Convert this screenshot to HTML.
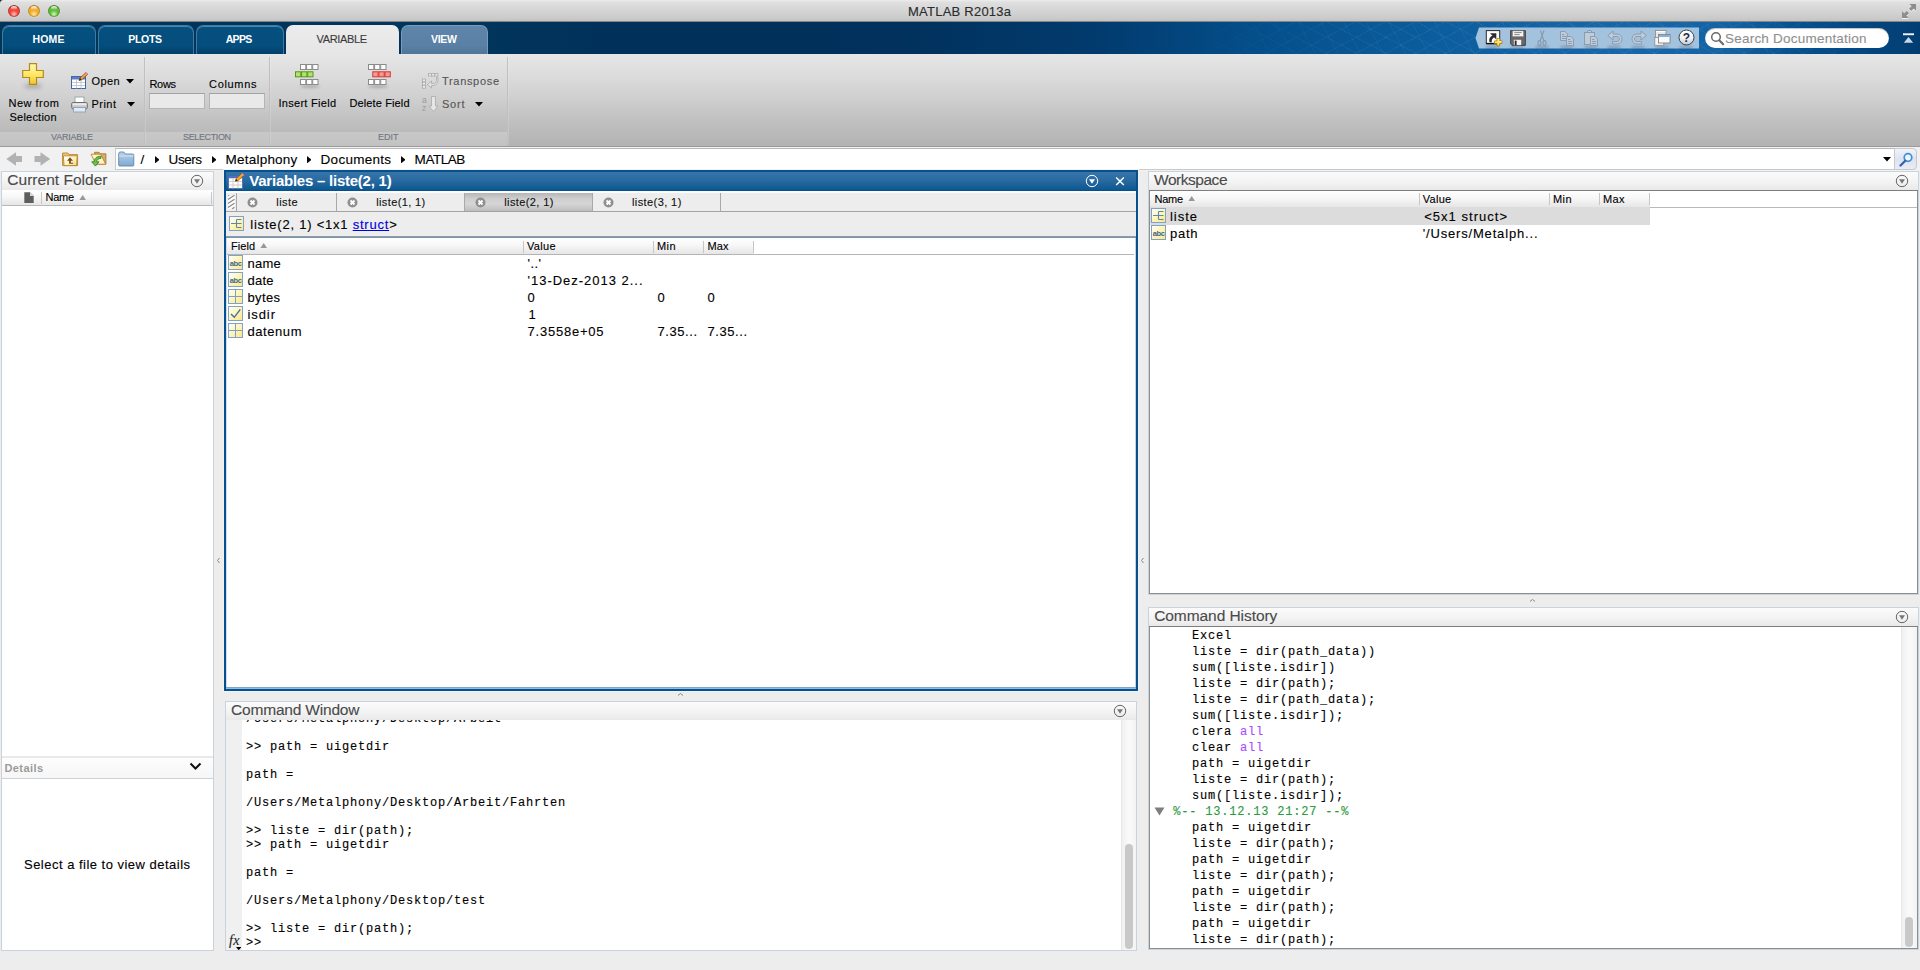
<!DOCTYPE html>
<html>
<head>
<meta charset="utf-8">
<title>MATLAB R2013a</title>
<style>
*{box-sizing:border-box;margin:0;padding:0}
html,body{width:1920px;height:970px;overflow:hidden;background:#ededed;font-family:"Liberation Sans",sans-serif;font-size:12px;color:#000}
.a{position:absolute;display:block}
.t{position:absolute;white-space:pre;-webkit-text-stroke-width:.12px}
</style>
</head>
<body>
<svg width="0" height="0" style="position:absolute"><defs><linearGradient id="gi" x1="0" y1="0" x2="1" y2="1"><stop offset="0" stop-color="#ffffff"/><stop offset=".4" stop-color="#fff7c6"/><stop offset="1" stop-color="#fae684"/></linearGradient></defs></svg>
<div class="a" style="left:0px;top:0px;width:1920px;height:22px;background:linear-gradient(#ececec,#dfdfdf 12%,#d6d6d6 45%,#cbcbcb 85%,#c4c4c4);border-bottom:1px solid #868686"></div>
<svg class="a" style="left:7px;top:4px" width="14" height="14" viewBox="0 0 14 14"><defs><radialGradient id="tl0" cx="50%" cy="78%" r="75%"><stop offset="0" stop-color="#ffc4bd"/><stop offset=".45" stop-color="#f2473d"/><stop offset=".82" stop-color="#f2473d"/><stop offset="1" stop-color="#8f241c"/></radialGradient><linearGradient id="th0" x1="0" y1="0" x2="0" y2="1"><stop offset="0" stop-color="#fff" stop-opacity=".95"/><stop offset="1" stop-color="#fff" stop-opacity=".05"/></linearGradient></defs><circle cx="7" cy="7.300" r="6.200" fill="rgba(255,255,255,.35)"/><circle cx="7" cy="7" r="5.850" fill="url(#tl0)"/><circle cx="7" cy="7" r="5.450" fill="none" stroke="#8f241c" stroke-width=".8" stroke-opacity=".75"/><ellipse cx="7" cy="3.900" rx="3.100" ry="1.900" fill="url(#th0)"/></svg>
<svg class="a" style="left:27px;top:4px" width="14" height="14" viewBox="0 0 14 14"><defs><radialGradient id="tl1" cx="50%" cy="78%" r="75%"><stop offset="0" stop-color="#ffe9a6"/><stop offset=".45" stop-color="#f0ae2c"/><stop offset=".82" stop-color="#f0ae2c"/><stop offset="1" stop-color="#a06c12"/></radialGradient><linearGradient id="th1" x1="0" y1="0" x2="0" y2="1"><stop offset="0" stop-color="#fff" stop-opacity=".95"/><stop offset="1" stop-color="#fff" stop-opacity=".05"/></linearGradient></defs><circle cx="7" cy="7.300" r="6.200" fill="rgba(255,255,255,.35)"/><circle cx="7" cy="7" r="5.850" fill="url(#tl1)"/><circle cx="7" cy="7" r="5.450" fill="none" stroke="#a06c12" stroke-width=".8" stroke-opacity=".75"/><ellipse cx="7" cy="3.900" rx="3.100" ry="1.900" fill="url(#th1)"/></svg>
<svg class="a" style="left:47px;top:4px" width="14" height="14" viewBox="0 0 14 14"><defs><radialGradient id="tl2" cx="50%" cy="78%" r="75%"><stop offset="0" stop-color="#d9f5b8"/><stop offset=".45" stop-color="#62bd3e"/><stop offset=".82" stop-color="#62bd3e"/><stop offset="1" stop-color="#35781f"/></radialGradient><linearGradient id="th2" x1="0" y1="0" x2="0" y2="1"><stop offset="0" stop-color="#fff" stop-opacity=".95"/><stop offset="1" stop-color="#fff" stop-opacity=".05"/></linearGradient></defs><circle cx="7" cy="7.300" r="6.200" fill="rgba(255,255,255,.35)"/><circle cx="7" cy="7" r="5.850" fill="url(#tl2)"/><circle cx="7" cy="7" r="5.450" fill="none" stroke="#35781f" stroke-width=".8" stroke-opacity=".75"/><ellipse cx="7" cy="3.900" rx="3.100" ry="1.900" fill="url(#th2)"/></svg>
<div class="t" style="left:908.00px;top:1.50px;font-size:13px;line-height:19px;color:#2b2b2b;letter-spacing:0.233px;letter-spacing:0.233457px;">MATLAB R2013a</div>
<svg class="a" style="left:1901px;top:3px" width="16" height="17" viewBox="0 0 16 17"><g fill="#fff" opacity=".7" transform="translate(0,1)"><path d="M8.300 1h6.700v6.700l-2.300-2.300-2.500 2.500-2.100-2.100 2.500-2.500z"/><path d="M7.700 15H1V8.300l2.300 2.300 2.500-2.500 2.100 2.100-2.500 2.500z"/></g><g fill="#8d8d8d"><path d="M8.300 1h6.700v6.700l-2.300-2.300-2.500 2.500-2.100-2.100 2.500-2.500z"/><path d="M7.700 15H1V8.300l2.300 2.300 2.500-2.500 2.100 2.100-2.500 2.500z"/></g></svg>
<div class="a" style="left:0px;top:22px;width:1920px;height:32px;background:linear-gradient(90deg,#013459 0,#01355b 480px,#01305a 640px,#01315c 900px,#023b6e 1100px,#044f8b 1260px,#0b5c9c 1420px,#1767a8 1600px,#1464a5 1720px,#05508f 1800px,#023d72 1920px)"></div>
<div class="a" style="left:1180px;top:22px;width:740px;height:32px;background:repeating-linear-gradient(28deg,rgba(255,255,255,0) 0,rgba(255,255,255,0) 13px,rgba(255,255,255,.05) 13px,rgba(255,255,255,.05) 14px),repeating-linear-gradient(-28deg,rgba(255,255,255,0) 0,rgba(255,255,255,0) 13px,rgba(255,255,255,.05) 13px,rgba(255,255,255,.05) 14px),repeating-linear-gradient(62deg,rgba(255,255,255,0) 0,rgba(255,255,255,0) 19px,rgba(255,255,255,.04) 19px,rgba(255,255,255,.04) 20px);-webkit-mask-image:linear-gradient(90deg,transparent,#000 25%,#000 75%,transparent);mask-image:linear-gradient(90deg,transparent,#000 25%,#000 75%,transparent)"></div>
<svg class="a" style="left:0px;top:0px" width="4" height="4" viewBox="0 0 4 4"><path d="M0 0h3.500A3.500 3.500 0 0 0 0 3.500z" fill="#16322a"/></svg>
<div class="a" style="left:2px;top:25px;width:94px;height:28.5px;border-radius:7px 7px 0 0;background:linear-gradient(#05507f,#044e7e 70%,#033f69);border:1px solid #3d79a3;border-bottom:none;box-shadow:inset 0 1px 0 #4b86ae"></div>
<div class="t" style="left:32.50px;top:31.50px;font-size:10.5px;line-height:15px;color:#fff;font-weight:bold;-webkit-text-stroke-width:0;letter-spacing:0.167px;letter-spacing:0.166612px;">HOME</div>
<div class="a" style="left:98px;top:25px;width:96px;height:28.5px;border-radius:7px 7px 0 0;background:linear-gradient(#05507f,#044e7e 70%,#033f69);border:1px solid #3d79a3;border-bottom:none;box-shadow:inset 0 1px 0 #4b86ae"></div>
<div class="t" style="left:128.30px;top:31.50px;font-size:10.5px;line-height:15px;color:#fff;font-weight:bold;-webkit-text-stroke-width:0;letter-spacing:-0.300px;letter-spacing:-0.300479px;">PLOTS</div>
<div class="a" style="left:196px;top:25px;width:88px;height:28.5px;border-radius:7px 7px 0 0;background:linear-gradient(#05507f,#044e7e 70%,#033f69);border:1px solid #3d79a3;border-bottom:none;box-shadow:inset 0 1px 0 #4b86ae"></div>
<div class="t" style="left:225.70px;top:31.50px;font-size:10.5px;line-height:15px;color:#fff;font-weight:bold;-webkit-text-stroke-width:0;letter-spacing:-0.664px;letter-spacing:-0.664435px;">APPS</div>
<div class="a" style="left:286px;top:25px;width:113px;height:29px;border-radius:7px 7px 0 0;background:linear-gradient(#ececec,#e6e6e6)"></div>
<div class="t" style="left:316.50px;top:31.00px;font-size:11px;line-height:16px;color:#3a3a3a;letter-spacing:-0.355px;letter-spacing:-0.355187px;">VARIABLE</div>
<div class="a" style="left:401px;top:25px;width:87px;height:28.5px;border-radius:7px 7px 0 0;background:linear-gradient(#5f86aa,#5a81a5 70%,#4f7598);border:1px solid #7a9bb9;border-bottom:none"></div>
<div class="t" style="left:431.00px;top:31.50px;font-size:10.5px;line-height:15px;color:#fff;font-weight:bold;-webkit-text-stroke-width:0;letter-spacing:-0.278px;letter-spacing:-0.278185px;">VIEW</div>
<svg class="a" style="left:1474px;top:27px" width="226" height="22" viewBox="0 0 226 22"><path d="M1.500 11 L5 0.500 H225 V21.500 H5 Z" fill="#a3c2dd"/></svg>
<svg class="a" style="left:1485px;top:30px" width="18" height="17" viewBox="0 0 18 17"><rect x="1.300" y="0.600" width="13.400" height="13" fill="#fbfbfb" stroke="#2a2a2a" stroke-width="1"/><path d="M1.300 13.600h13.400" stroke="#111" stroke-width="1.400"/><path d="M5 3.200h6.300v6.300z" fill="#2b2b2b"/><path d="M9.600 7.300C7.300 8.200 6.300 9.900 6.800 12.500L4.600 12.200C3.600 9 5 6.400 7.700 5.400z" fill="#2b2b2b"/><path d="M12 8.500h2.600v2.400H17v2.600h-2.400V16H12v-2.500H9.500v-2.600H12z" fill="#ffe25a" stroke="#a87f0e" stroke-width=".8"/><path d="M12.600 9.300h1.300v2.300h2.300v.600" fill="none" stroke="#fff8c8" stroke-width=".7"/></svg>
<svg class="a" style="left:1510px;top:30px" width="16" height="16" viewBox="0 0 16 16"><path d="M0.600 0.600h14.800v14.800H2.200L0.600 13.800z" fill="#686868" stroke="#3e3e3e" stroke-width=".9"/><rect x="2.600" y="0.900" width="10.800" height="5.600" fill="#f6f6f6" stroke="#8a8a8a" stroke-width=".5"/><path d="M4.300 2.600h7.400M4.300 4.600h5.400" stroke="#7a7a7a" stroke-width=".9"/><rect x="3.800" y="9.800" width="7.400" height="5.400" fill="#f4f4f4"/><rect x="4.700" y="10.600" width="1.900" height="4.600" fill="#2a2a2a"/></svg>
<div class="a" style="left:1485px;top:45.5px;width:14px;height:2.5px;border-radius:50%;background:rgba(20,40,70,.28);filter:blur(1.200px)"></div>
<div class="a" style="left:1510px;top:45.5px;width:14px;height:2.5px;border-radius:50%;background:rgba(20,40,70,.28);filter:blur(1.200px)"></div>
<div class="a" style="left:1535px;top:45.5px;width:14px;height:2.5px;border-radius:50%;background:rgba(20,40,70,.28);filter:blur(1.200px)"></div>
<div class="a" style="left:1560px;top:45.5px;width:14px;height:2.5px;border-radius:50%;background:rgba(20,40,70,.28);filter:blur(1.200px)"></div>
<div class="a" style="left:1584px;top:45.5px;width:14px;height:2.5px;border-radius:50%;background:rgba(20,40,70,.28);filter:blur(1.200px)"></div>
<div class="a" style="left:1607px;top:45.5px;width:14px;height:2.5px;border-radius:50%;background:rgba(20,40,70,.28);filter:blur(1.200px)"></div>
<div class="a" style="left:1631px;top:45.5px;width:14px;height:2.5px;border-radius:50%;background:rgba(20,40,70,.28);filter:blur(1.200px)"></div>
<div class="a" style="left:1655px;top:45.5px;width:14px;height:2.5px;border-radius:50%;background:rgba(20,40,70,.28);filter:blur(1.200px)"></div>
<div class="a" style="left:1679px;top:45.5px;width:14px;height:2.5px;border-radius:50%;background:rgba(20,40,70,.28);filter:blur(1.200px)"></div>
<svg class="a" style="left:1534px;top:30px" width="16" height="16" viewBox="0 0 16 16"><g stroke="#8798ab" fill="none" stroke-width="1.100"><path d="M10 0.500L6.300 10.500M6.500 0.500L9.700 10.500"/><ellipse cx="5.500" cy="13" rx="1.500" ry="2.400"/><ellipse cx="10.500" cy="13" rx="1.500" ry="2.400"/></g></svg>
<svg class="a" style="left:1559px;top:30px" width="16" height="16" viewBox="0 0 16 16"><g fill="#bfcddb" stroke="#8798ab" stroke-width=".9"><path d="M1.500 1.500h4.500l2.500 2.500v6.500h-7z"/><path d="M7.500 6.500h4.500l2.500 2.500v6.500h-7z"/></g><path d="M3 4.500h2.500M3 6.500h4M3 8.500h4M9 9.500h2.500M9 11.500h4M9 13.500h4" stroke="#8798ab" stroke-width=".9"/></svg>
<svg class="a" style="left:1583px;top:30px" width="16" height="16" viewBox="0 0 16 16"><g fill="#bfcddb" stroke="#8798ab" stroke-width=".9"><rect x="1.500" y="2.500" width="10" height="12"/><path d="M4 2.500l1-2h3l1 2z"/><path d="M7.500 6.500h4.500l2.500 2.500v6.500h-7z"/></g><path d="M9 9.500h2.500M9 11.500h4M9 13.500h4" stroke="#8798ab" stroke-width=".9"/></svg>
<svg class="a" style="left:1607px;top:30px" width="16" height="16" viewBox="0 0 16 16"><path d="M0.800 5.500L6 1v3h4c3 0 5 2 5 5s-2 5-5 5H5.500v-2.500H10c1.500 0 2.500-1 2.500-2.500S11.500 6.500 10 6.500H6v3.500z" fill="#bfcddb" stroke="#8798ab" stroke-width=".9"/></svg>
<svg class="a" style="left:1631px;top:30px" width="16" height="16" viewBox="0 0 16 16"><path d="M15.200 5.500L10 1v3H6C3 4 1 6 1 9s2 5 5 5h4.500v-2.500H6C4.500 11.500 3.500 10.500 3.500 9S4.500 6.500 6 6.500h4v3.500z" fill="#bfcddb" stroke="#8798ab" stroke-width=".9"/></svg>
<svg class="a" style="left:1654px;top:30px" width="17" height="16" viewBox="0 0 17 16"><rect x="1.500" y="0.500" width="10.500" height="9" fill="#e8e8e8" stroke="#8a8a8a" stroke-width=".8"/><path d="M2 1.500h9.500" stroke="#fbfbfb"/><rect x="0.800" y="7.500" width="9" height="7.800" fill="#f4f4f4" stroke="#8a8a8a" stroke-width=".8"/><rect x="4.500" y="4.500" width="11.500" height="8.500" fill="#fafafa" stroke="#777" stroke-width=".8"/><rect x="5" y="5" width="10.500" height="2" fill="#7fb2de"/></svg>
<svg class="a" style="left:1678px;top:29px" width="17" height="17" viewBox="0 0 17 17"><defs><linearGradient id="gh" x1="0" y1="0" x2="0" y2="1"><stop offset="0" stop-color="#ffffff"/><stop offset=".55" stop-color="#eef1f4"/><stop offset="1" stop-color="#bfc7cf"/></linearGradient></defs><circle cx="8.500" cy="8.500" r="7.500" fill="url(#gh)" stroke="#37414d" stroke-width="1"/><text x="8.500" y="12.900" text-anchor="middle" font-family="Liberation Sans" font-weight="bold" font-size="12" fill="#1d2a44">?</text></svg>
<div class="a" style="left:1705px;top:28px;width:184px;height:20px;border-radius:10px;background:#fff;box-shadow:inset 0 1px 1px rgba(0,0,0,.25)"></div>
<svg class="a" style="left:1710px;top:31.2px" width="15" height="15" viewBox="0 0 15 15"><circle cx="6" cy="6" r="4.300" fill="none" stroke="#686868" stroke-width="1.500"/><path d="M9.200 9.200l4 4" stroke="#686868" stroke-width="2" stroke-linecap="round"/></svg>
<div class="t" style="left:1725.00px;top:28.80px;font-size:13.5px;line-height:19px;color:#8f8f8f;letter-spacing:0.220px;letter-spacing:0.219595px;">Search Documentation</div>
<svg class="a" style="left:1902px;top:33px" width="14" height="11" viewBox="0 0 14 11"><rect x="1" y="0.300" width="11" height="1.900" fill="#eef3f8"/><path d="M6.500 3.900L11.200 9.700H1.800z" fill="#c6d7e7"/></svg>
<div class="a" style="left:0px;top:54px;width:1920px;height:92px;background:linear-gradient(#e6e6e6,#e0e0e0 15%,#d1d1d1 45%,#bfbfbf 75%,#b3b3b3)"></div>
<div class="a" style="left:0px;top:146px;width:1920px;height:1px;background:#9b9b9b"></div>
<div class="a" style="left:0px;top:132px;width:507px;height:14px;background:linear-gradient(#c8c8c8,#c2c2c2)"></div>
<div class="a" style="left:144px;top:57px;width:1px;height:88px;background:#c0c0c0"></div>
<div class="a" style="left:145px;top:57px;width:1px;height:88px;background:rgba(255,255,255,.15)"></div>
<div class="a" style="left:269px;top:57px;width:1px;height:88px;background:#c0c0c0"></div>
<div class="a" style="left:270px;top:57px;width:1px;height:88px;background:rgba(255,255,255,.15)"></div>
<div class="a" style="left:507px;top:57px;width:1px;height:88px;background:#c0c0c0"></div>
<div class="a" style="left:508px;top:57px;width:1px;height:88px;background:rgba(255,255,255,.15)"></div>
<div class="t" style="left:51.00px;top:131.10px;font-size:9px;line-height:13px;color:#70757e;letter-spacing:-0.193px;letter-spacing:-0.193205px;">VARIABLE</div>
<div class="t" style="left:183.00px;top:131.10px;font-size:9px;line-height:13px;color:#70757e;letter-spacing:-0.377px;letter-spacing:-0.3765px;">SELECTION</div>
<div class="t" style="left:378.00px;top:131.10px;font-size:9px;line-height:13px;color:#70757e;letter-spacing:-0.000px;letter-spacing:-0.000197917px;">EDIT</div>
<div class="a" style="left:24px;top:84px;width:18px;height:4px;border-radius:50%;background:rgba(0,0,0,.25);filter:blur(2px)"></div>
<svg class="a" style="left:22px;top:63px" width="22" height="22" viewBox="0 0 22 22"><defs><linearGradient id="gp" x1="0" y1="0" x2="0" y2="1"><stop offset="0" stop-color="#fff7b8"/><stop offset=".5" stop-color="#ffe96b"/><stop offset="1" stop-color="#f2c52c"/></linearGradient></defs><path d="M7.500 0.700h7v6.800h6.800v7h-6.800v6.800h-7v-6.800H0.700v-7h6.800z" fill="url(#gp)" stroke="#b58a1a" stroke-width="1.200"/></svg>
<div class="t" style="left:8.50px;top:94.50px;font-size:11px;line-height:16px;color:#000;letter-spacing:0.491px;letter-spacing:0.491174px;">New from</div>
<div class="t" style="left:9.50px;top:108.70px;font-size:11px;line-height:16px;color:#000;letter-spacing:0.219px;letter-spacing:0.218529px;">Selection</div>
<svg class="a" style="left:71px;top:72px" width="17" height="17" viewBox="0 0 17 17"><rect x="0.500" y="4.500" width="14" height="12" fill="#fff" stroke="#4466a8"/><rect x="1" y="5" width="13" height="2.500" fill="#5b7ec4"/><path d="M1 10.500h13M1 13.500h13M5.500 7.500v9M10 7.500v9" stroke="#b7bfd0" stroke-width=".8"/><path d="M8 8.500l1-2.500 6-5.500 1.800 1.800-6 5.500z" fill="#f6a13a" stroke="#7a4a12" stroke-width=".7"/><path d="M14 1.500l1.500-1 1.300 1.300-1 1.500z" fill="#e88"/><path d="M8 8.500l1-2.500 1.500 1.500z" fill="#222"/></svg>
<div class="t" style="left:91.50px;top:73.20px;font-size:11px;line-height:16px;color:#000;letter-spacing:0.364px;letter-spacing:0.363578px;">Open</div>
<svg class="a" style="left:126px;top:79px" width="8" height="4.5" viewBox="0 0 8 4.5"><path d="M0 0h8L4 4.500z" fill="#000"/></svg>
<svg class="a" style="left:71px;top:96px" width="17" height="17" viewBox="0 0 17 17"><rect x="4" y="1" width="9" height="6" fill="#fff" stroke="#9aa"/><rect x="0.700" y="6.500" width="15.600" height="6.500" rx="1.500" fill="#c9c9c9" stroke="#6d6d6d"/><rect x="1.500" y="7.300" width="14" height="2" fill="#e9e9e9"/><rect x="2.500" y="11.500" width="12" height="4.500" fill="#dfeaf5" stroke="#8fa6bd"/></svg>
<div class="t" style="left:91.50px;top:96.30px;font-size:11px;line-height:16px;color:#000;letter-spacing:0.471px;letter-spacing:0.470527px;">Print</div>
<svg class="a" style="left:127px;top:102px" width="8" height="4.5" viewBox="0 0 8 4.5"><path d="M0 0h8L4 4.500z" fill="#000"/></svg>
<div class="t" style="left:149.50px;top:75.70px;font-size:11px;line-height:16px;color:#000;letter-spacing:-0.335px;letter-spacing:-0.335167px;">Rows</div>
<div class="t" style="left:209.00px;top:75.70px;font-size:11px;line-height:16px;color:#000;letter-spacing:0.683px;letter-spacing:0.682648px;">Columns</div>
<div class="a" style="left:149px;top:93px;width:56px;height:16px;background:#e9e9e9;border:1px solid #b4b4b4;border-top-color:#a2a2a2"></div>
<div class="a" style="left:209px;top:93px;width:56px;height:16px;background:#e9e9e9;border:1px solid #b4b4b4;border-top-color:#a2a2a2"></div>
<div class="a" style="left:300px;top:85px;width:20px;height:3px;border-radius:50%;background:rgba(0,0,0,.22);filter:blur(1.500px)"></div>
<svg class="a" style="left:294px;top:63px" width="27" height="23" viewBox="0 0 27 23"><rect x="6.5" y="1.5" width="5.300" height="5" fill="#fdfdfd" stroke="#8a8a8a"/><rect x="12.6" y="1.5" width="5.300" height="5" fill="#fdfdfd" stroke="#8a8a8a"/><rect x="18.7" y="1.5" width="5.300" height="5" fill="#fdfdfd" stroke="#8a8a8a"/><rect x="1.5" y="8.8" width="5.300" height="5" fill="#b9e06a" stroke="#4f9a1e"/><rect x="7.6" y="8.8" width="5.300" height="5" fill="#b9e06a" stroke="#4f9a1e"/><rect x="13.7" y="8.8" width="5.300" height="5" fill="#b9e06a" stroke="#4f9a1e"/><rect x="6.5" y="16.5" width="5.300" height="5" fill="#fdfdfd" stroke="#8a8a8a"/><rect x="12.6" y="16.5" width="5.300" height="5" fill="#fdfdfd" stroke="#8a8a8a"/><rect x="18.7" y="16.5" width="5.300" height="5" fill="#fdfdfd" stroke="#8a8a8a"/></svg>
<div class="t" style="left:278.50px;top:95.00px;font-size:11px;line-height:16px;color:#000;letter-spacing:0.281px;letter-spacing:0.28096px;">Insert Field</div>
<div class="a" style="left:368px;top:85px;width:20px;height:3px;border-radius:50%;background:rgba(0,0,0,.22);filter:blur(1.500px)"></div>
<svg class="a" style="left:366px;top:63px" width="27" height="23" viewBox="0 0 27 23"><rect x="2.5" y="1.5" width="5.300" height="5" fill="#fdfdfd" stroke="#8a8a8a"/><rect x="8.6" y="1.5" width="5.300" height="5" fill="#fdfdfd" stroke="#8a8a8a"/><rect x="14.7" y="1.5" width="5.300" height="5" fill="#fdfdfd" stroke="#8a8a8a"/><rect x="6.8" y="8.8" width="5.300" height="5" fill="#f79a94" stroke="#d8362f"/><rect x="12.9" y="8.8" width="5.300" height="5" fill="#f79a94" stroke="#d8362f"/><rect x="19" y="8.8" width="5.300" height="5" fill="#f79a94" stroke="#d8362f"/><rect x="2.5" y="16.5" width="5.300" height="5" fill="#fdfdfd" stroke="#8a8a8a"/><rect x="8.6" y="16.5" width="5.300" height="5" fill="#fdfdfd" stroke="#8a8a8a"/><rect x="14.7" y="16.5" width="5.300" height="5" fill="#fdfdfd" stroke="#8a8a8a"/></svg>
<div class="t" style="left:349.50px;top:95.00px;font-size:11px;line-height:16px;color:#000;letter-spacing:0.119px;letter-spacing:0.118577px;">Delete Field</div>
<svg class="a" style="left:422px;top:73px" width="17" height="17" viewBox="0 0 17 17"><g fill="#ededed" stroke="#a9a9a9" stroke-width=".8"><rect x="6.500" y="0.500" width="3" height="2.500"/><rect x="9.700" y="0.500" width="3" height="2.500"/><rect x="12.900" y="0.500" width="3" height="2.500"/><rect x="0.500" y="6" width="3" height="2.800"/><rect x="0.500" y="9.200" width="3" height="2.800"/><rect x="0.500" y="12.400" width="3" height="2.800"/></g><path d="M14.500 4.500v3c0 2-1.500 3-3.500 3H9.500V8L5.500 11.500 9.500 15v-2.500H11c3 0 5-2 5-5v-3z" fill="#e3e3e3" stroke="#a9a9a9" stroke-width=".8"/></svg>
<div class="t" style="left:442.00px;top:72.70px;font-size:11px;line-height:16px;color:#555;letter-spacing:0.680px;letter-spacing:0.679645px;">Transpose</div>
<svg class="a" style="left:422px;top:96px" width="17" height="17" viewBox="0 0 17 17"><text x="0" y="6.500" font-family="Liberation Sans" font-size="8.500" fill="#9c9c9c">a</text><text x="0" y="15" font-family="Liberation Sans" font-size="8.500" fill="#9c9c9c">z</text><path d="M9.500 0.500h4v9.500h2.500L11.500 15.500 7 10h2.500z" fill="#e6e6e6" stroke="#a9a9a9" stroke-width=".8"/></svg>
<div class="t" style="left:442.00px;top:96.30px;font-size:11px;line-height:16px;color:#555;letter-spacing:0.775px;letter-spacing:0.775333px;">Sort</div>
<svg class="a" style="left:475px;top:102px" width="8" height="4.5" viewBox="0 0 8 4.5"><path d="M0 0h8L4 4.500z" fill="#000"/></svg>
<div class="a" style="left:0px;top:147px;width:1920px;height:24px;background:#f1f1f1"></div>
<svg class="a" style="left:6px;top:151px" width="17" height="16" viewBox="0 0 17 16"><path d="M0.300 8L10 1.200v3.800h6v6h-6v3.800z" fill="#b2b2b2"/></svg>
<svg class="a" style="left:34px;top:151px" width="17" height="16" viewBox="0 0 17 16"><path d="M16.200 8L6.500 1.200v3.800h-6v6h6v3.800z" fill="#b2b2b2"/></svg>
<svg class="a" style="left:62px;top:152px" width="17" height="15" viewBox="0 0 17 15"><defs><linearGradient id="gf" x1="0" y1="0" x2="1" y2="1"><stop offset="0" stop-color="#ffffff"/><stop offset=".55" stop-color="#fff3bf"/><stop offset="1" stop-color="#f2d777"/></linearGradient></defs><path d="M0.600 1h5.200l1.200 1.600h8.600v11H0.600z" fill="#e9c777" stroke="#b8862d" stroke-width=".9"/><path d="M1.400 3.800h13.800l-0.600 9.800H2z" fill="url(#gf)" stroke="#b8862d" stroke-width=".9"/><path d="M8 5.300L5 8.800h2.100v3h4v-1.100H8.900V8.800H11z" fill="#7a4a20"/></svg>
<svg class="a" style="left:90px;top:151px" width="17" height="16" viewBox="0 0 17 16"><path d="M4.500 1.300h4.600l1 1.500h5.800v10.400H6z" fill="#d2ae6e" stroke="#a57a2c" stroke-width=".9"/><path d="M1 3.200h9.800l4.800 10H6z" fill="#fff4cf" stroke="#b8862d" stroke-width=".9"/><path d="M11 5.200c-4.300 0-6.800 2.200-6.800 5.600H1.700l3.700 4.300 3.700-4.300H6.700c0-2 1.500-3.400 4.300-3.400z" fill="#6cc24a" stroke="#2f7d1a" stroke-width=".8"/></svg>
<div class="a" style="left:115px;top:148px;width:1780px;height:21.5px;background:#fff;border:1px solid #c9c9c9;border-top-color:#b9b9b9"></div>
<svg class="a" style="left:118px;top:151px" width="17" height="16" viewBox="0 0 17 16"><defs><linearGradient id="gb" x1="0" y1="0" x2="0" y2="1"><stop offset="0" stop-color="#b9d3ea"/><stop offset="1" stop-color="#7ea9d0"/></linearGradient></defs><path d="M0.700 2.500q0-1.500 1.500-1.500h3.600l1.500 2h7.500q1 0 1 1v10q0 1-1 1H1.700q-1 0-1-1z" fill="url(#gb)" stroke="#5f86ad" stroke-width=".9"/><path d="M1 5h14.500" stroke="#d6e6f4"/></svg>
<div class="t" style="left:140.50px;top:149.60px;font-size:13.5px;line-height:19px;color:#000;letter-spacing:0.249px;letter-spacing:0.24932px;">/</div>
<div class="t" style="left:168.60px;top:149.60px;font-size:13.5px;line-height:19px;color:#000;letter-spacing:-0.463px;letter-spacing:-0.463285px;">Users</div>
<div class="t" style="left:225.60px;top:149.60px;font-size:13.5px;line-height:19px;color:#000;letter-spacing:0.212px;letter-spacing:0.211737px;">Metalphony</div>
<div class="t" style="left:320.60px;top:149.60px;font-size:13.5px;line-height:19px;color:#000;letter-spacing:0.265px;letter-spacing:0.265231px;">Documents</div>
<div class="t" style="left:414.60px;top:149.60px;font-size:13.5px;line-height:19px;color:#000;letter-spacing:-0.462px;letter-spacing:-0.462352px;">MATLAB</div>
<svg class="a" style="left:154.7px;top:155.8px" width="4.7" height="7.4" viewBox="0 0 4.7 7.4"><path d="M0 0L4.700 3.700 0 7.400z" fill="#0a0a0a"/></svg>
<svg class="a" style="left:211.7px;top:155.8px" width="4.7" height="7.4" viewBox="0 0 4.7 7.4"><path d="M0 0L4.700 3.700 0 7.400z" fill="#0a0a0a"/></svg>
<svg class="a" style="left:306.8px;top:155.8px" width="4.7" height="7.4" viewBox="0 0 4.7 7.4"><path d="M0 0L4.700 3.700 0 7.400z" fill="#0a0a0a"/></svg>
<svg class="a" style="left:400.6px;top:155.8px" width="4.7" height="7.4" viewBox="0 0 4.7 7.4"><path d="M0 0L4.700 3.700 0 7.400z" fill="#0a0a0a"/></svg>
<svg class="a" style="left:1883px;top:157.3px" width="8" height="4.5" viewBox="0 0 8 4.5"><path d="M0 0h8L4 4.500z" fill="#000"/></svg>
<div class="a" style="left:1894px;top:148px;width:22.5px;height:21.5px;background:linear-gradient(#f1f3f8,#dfe3ee 50%,#e9ecf3);border:1px solid #c5c9d3;border-radius:0 4px 4px 0"></div>
<svg class="a" style="left:1899px;top:152px" width="15" height="15" viewBox="0 0 15 15"><circle cx="9" cy="5.500" r="3.800" fill="#eaf6ff" stroke="#3f8fd6" stroke-width="1.700"/><path d="M6.300 8.700L1.500 13.500" stroke="#2f62b5" stroke-width="2.200" stroke-linecap="round"/></svg>
<div class="a" style="left:1px;top:171px;width:213px;height:780px;background:#fff;border:1px solid #c9d3de"></div>
<div class="a" style="left:2px;top:172px;width:211px;height:18px;background:linear-gradient(#fbfbfb,#f4f4f4 50%,#e9e9e9)"></div>
<div class="t" style="left:7.30px;top:168.50px;font-size:15.5px;line-height:22px;color:#4a4a4a;letter-spacing:0.021px;letter-spacing:0.0210895px;">Current Folder</div>
<svg class="a" style="left:190px;top:174px" width="14" height="14" viewBox="0 0 14 14"><circle cx="7" cy="7" r="5.700" fill="none" stroke="#666" stroke-width="1"/><path d="M4 5.200h6L7 9.800z" fill="#777"/></svg>
<div class="a" style="left:2px;top:190px;width:211px;height:15px;background:linear-gradient(#ffffff,#f7f7f7 45%,#e6e6e6)"></div>
<div class="a" style="left:2px;top:205px;width:211px;height:1px;background:#b9b9b9"></div>
<svg class="a" style="left:24px;top:191.7px" width="10" height="11.3" viewBox="0 0 10 11.3"><path d="M0.300 0.300h5.700l3.700 3.700v7h-9.400z" fill="#5e5e5e"/><path d="M6 0.300v3.700h3.700z" fill="#d8d8d8"/></svg>
<div class="a" style="left:41px;top:192px;width:1px;height:12px;background:#c8c8c8"></div>
<div class="a" style="left:211px;top:192px;width:1px;height:12px;background:#c8c8c8"></div>
<div class="t" style="left:45.50px;top:189.00px;font-size:11px;line-height:16px;color:#000;letter-spacing:-0.281px;letter-spacing:-0.280833px;">Name</div>
<svg class="a" style="left:79px;top:194.5px" width="7.4" height="5.6" viewBox="0 0 7.4 5.6"><path d="M3.700 0L7.400 5.600H0z" fill="#989898"/></svg>
<div class="a" style="left:2px;top:756px;width:211px;height:2px;background:#e9e9e9"></div>
<div class="a" style="left:2px;top:758px;width:211px;height:20px;background:linear-gradient(#fdfdfd,#f6f6f6)"></div>
<div class="a" style="left:2px;top:778px;width:211px;height:1px;background:#cdd3da"></div>
<div class="t" style="left:4.50px;top:760.00px;font-size:11px;line-height:16px;color:#9b9b9b;font-weight:bold;-webkit-text-stroke-width:0;letter-spacing:0.405px;letter-spacing:0.404594px;">Details</div>
<svg class="a" style="left:189px;top:762px" width="13" height="9" viewBox="0 0 13 9"><path d="M1.500 1.500l5 5 5-5" fill="none" stroke="#111" stroke-width="2"/></svg>
<div class="t" style="left:24.00px;top:854.50px;font-size:13px;line-height:19px;color:#000;letter-spacing:0.483px;letter-spacing:0.4834px;">Select a file to view details</div>
<div class="a" style="left:224px;top:170px;width:914px;height:521px;background:#fff;border:2px solid #05508f;box-shadow:0 0 0 1px #f5f1ee"></div>
<div class="a" style="left:226px;top:192px;width:1px;height:495px;background:rgba(120,160,200,.35)"></div>
<div class="a" style="left:1135px;top:192px;width:1px;height:495px;background:rgba(120,160,200,.45)"></div>
<div class="a" style="left:226px;top:687px;width:910px;height:1px;background:#7fa6ca"></div>
<div class="a" style="left:226px;top:688px;width:910px;height:1px;background:#8fbfe9"></div>
<div class="a" style="left:226px;top:172px;width:910px;height:18px;background:linear-gradient(#3676aa,#2a6aa2 45%,#115b93 90%,#0d578f)"></div>
<div class="a" style="left:226px;top:190px;width:910px;height:1px;background:#05508f"></div>
<div class="a" style="left:226px;top:191px;width:910px;height:2px;background:#fcfcfc"></div>
<svg class="a" style="left:228px;top:173px" width="17" height="16" viewBox="0 0 17 16"><rect x="0.500" y="3.500" width="14" height="12" fill="#fdfdff" stroke="#4f64a8" stroke-width=".8"/><rect x="0.500" y="3.300" width="14" height="2" fill="#4f6fc4"/><path d="M1 8.500h13M1 12h13M5 5.500v10M10 5.500v10" stroke="#c9c3bd" stroke-width=".8"/><path d="M7.300 8.300l.700-2.300 6-5.800 1.900 1.900-6 5.800z" fill="#f7a823" stroke="#a84a10" stroke-width=".6"/><path d="M13.300 0.900l.900-.700 1.900 1.900-.700.900z" fill="#f090a8"/><path d="M7.300 8.300l.700-2.300 1.600 1.600z" fill="#111"/></svg>
<div class="t" style="left:249.30px;top:170.00px;font-size:15px;line-height:21px;color:#fff;font-weight:bold;-webkit-text-stroke-width:0;letter-spacing:-0.236px;letter-spacing:-0.235618px;">Variables – liste(2, 1)</div>
<svg class="a" style="left:1085px;top:174px" width="14" height="14" viewBox="0 0 14 14"><circle cx="7" cy="7" r="5.700" fill="none" stroke="#fff" stroke-width="1"/><path d="M4 5.200h6L7 9.800z" fill="#fff"/></svg>
<svg class="a" style="left:1115px;top:176px" width="10" height="10" viewBox="0 0 10 10"><path d="M1.200 1.500l7.600 7.500M8.800 1.500l-7.600 7.500" stroke="#fff" stroke-width="1.500"/></svg>
<div class="a" style="left:226px;top:193px;width:910px;height:18px;background:#ededed"></div>
<div class="a" style="left:226px;top:211px;width:910px;height:1px;background:#a3a3a3"></div>
<div class="a" style="left:228px;top:195px;width:7px;height:14px;background:#f8f8f8"></div>
<svg class="a" style="left:228px;top:195px" width="7" height="14" viewBox="0 0 7 14"><path d="M0 5.800l6.500-4.300M0 9.800l6.500-4.300M0 13.800l6.500-4.300M4.200 15l2.300-1.500M0 1.800l1.800-1.200" stroke="#fff" stroke-width="1.300"/><path d="M0 4.500l6.500-4.300M0 8.500l6.500-4.300M0 12.500l6.500-4.300M4 14l2.500-1.700M0 0.800l1.200-.800" stroke="#8a8a8a" stroke-width="1.100"/></svg>
<div class="a" style="left:464px;top:193px;width:128px;height:18px;background:linear-gradient(#b6b6b6,#cdcdcd 30%,#d6d6d6 60%,#bebebe)"></div>
<div class="a" style="left:236px;top:193px;width:1px;height:18px;background:#a9a9a9"></div>
<div class="a" style="left:336px;top:193px;width:1px;height:18px;background:#a9a9a9"></div>
<div class="a" style="left:464px;top:193px;width:1px;height:18px;background:#a9a9a9"></div>
<div class="a" style="left:592px;top:193px;width:1px;height:18px;background:#a9a9a9"></div>
<div class="a" style="left:720px;top:193px;width:1px;height:18px;background:#a9a9a9"></div>
<svg class="a" style="left:246.5px;top:196.5px" width="11" height="11" viewBox="0 0 11 11"><circle cx="5.500" cy="5.500" r="5" fill="#8f8f8f"/><path d="M3.500 3.500l4 4M7.500 3.500l-4 4" stroke="#fff" stroke-width="1.900"/></svg>
<div class="t" style="left:276.30px;top:193.70px;font-size:11px;line-height:16px;color:#111;letter-spacing:0.435px;letter-spacing:0.434598px;">liste</div>
<svg class="a" style="left:346.5px;top:196.5px" width="11" height="11" viewBox="0 0 11 11"><circle cx="5.500" cy="5.500" r="5" fill="#8f8f8f"/><path d="M3.500 3.500l4 4M7.500 3.500l-4 4" stroke="#fff" stroke-width="1.900"/></svg>
<div class="t" style="left:376.20px;top:193.70px;font-size:11px;line-height:16px;color:#111;letter-spacing:0.376px;letter-spacing:0.376439px;">liste(1, 1)</div>
<svg class="a" style="left:474.5px;top:196.5px" width="11" height="11" viewBox="0 0 11 11"><circle cx="5.500" cy="5.500" r="5" fill="#8f8f8f"/><path d="M3.500 3.500l4 4M7.500 3.500l-4 4" stroke="#fff" stroke-width="1.900"/></svg>
<div class="t" style="left:504.30px;top:193.70px;font-size:11px;line-height:16px;color:#111;letter-spacing:0.376px;letter-spacing:0.376439px;">liste(2, 1)</div>
<svg class="a" style="left:602.5px;top:196.5px" width="11" height="11" viewBox="0 0 11 11"><circle cx="5.500" cy="5.500" r="5" fill="#8f8f8f"/><path d="M3.500 3.500l4 4M7.500 3.500l-4 4" stroke="#fff" stroke-width="1.900"/></svg>
<div class="t" style="left:632.00px;top:193.70px;font-size:11px;line-height:16px;color:#111;letter-spacing:0.406px;letter-spacing:0.406439px;">liste(3, 1)</div>
<div class="a" style="left:226px;top:212px;width:910px;height:24.5px;background:#ededed"></div>
<div class="a" style="left:226px;top:236px;width:910px;height:1px;background:#9a9a9a"></div>
<div class="a" style="left:226px;top:237px;width:910px;height:1px;background:#6f96bb"></div>
<svg class="a" style="left:229px;top:216px" width="15" height="15" viewBox="0 0 15 15"><rect x="0.500" y="0.500" width="14" height="14" fill="url(#gi)" stroke="#7fa3c8"/><path d="M2 7.500h5M7.500 3.500v8M7.500 3.500h5M7.500 7.500h5M7.500 11.500h5" fill="none" stroke="#5d86b0" stroke-width="1.100"/></svg>
<div class="t" style="left:250.30px;top:214.50px;font-size:13px;line-height:19px;color:#000;letter-spacing:0.773px;letter-spacing:0.773469px;">liste(2, 1) &lt;1x1 <span style="color:#0000e0;text-decoration:underline">struct</span>&gt;</div>
<div class="a" style="left:227px;top:238px;width:527px;height:16px;background:linear-gradient(#ffffff,#f7f7f7 45%,#e6e6e6)"></div>
<div class="a" style="left:227px;top:254px;width:907px;height:1px;background:#b5b5b5"></div>
<div class="a" style="left:523px;top:241px;width:1px;height:12px;background:#c6c6c6"></div>
<div class="a" style="left:653px;top:241px;width:1px;height:12px;background:#c6c6c6"></div>
<div class="a" style="left:703px;top:241px;width:1px;height:12px;background:#c6c6c6"></div>
<div class="a" style="left:753px;top:241px;width:1px;height:12px;background:#c6c6c6"></div>
<div class="t" style="left:231.00px;top:237.60px;font-size:11px;line-height:16px;color:#000;letter-spacing:0.039px;letter-spacing:0.039375px;">Field</div>
<svg class="a" style="left:259.5px;top:242.5px" width="7.4" height="5.6" viewBox="0 0 7.4 5.6"><path d="M3.700 0L7.400 5.600H0z" fill="#989898"/></svg>
<div class="t" style="left:527.00px;top:237.60px;font-size:11px;line-height:16px;color:#000;letter-spacing:0.296px;letter-spacing:0.29559px;">Value</div>
<div class="t" style="left:657.00px;top:237.60px;font-size:11px;line-height:16px;color:#000;letter-spacing:0.388px;letter-spacing:0.387609px;">Min</div>
<div class="t" style="left:707.50px;top:237.60px;font-size:11px;line-height:16px;color:#000;letter-spacing:0.110px;letter-spacing:0.109555px;">Max</div>
<svg class="a" style="left:228px;top:255px" width="15" height="15" viewBox="0 0 15 15"><rect x="0.500" y="0.500" width="14" height="14" fill="url(#gi)" stroke="#7fa3c8"/><text x="7.600" y="10.600" text-anchor="middle" font-family="Liberation Sans" font-weight="bold" font-size="7.500" fill="#3a6690" letter-spacing="-.35">abc</text></svg>
<div class="t" style="left:247.50px;top:253.50px;font-size:13px;line-height:19px;color:#000;letter-spacing:0.227px;letter-spacing:0.226901px;">name</div>
<div class="t" style="left:527.50px;top:253.50px;font-size:13px;line-height:19px;color:#000;letter-spacing:0.438px;letter-spacing:0.4375px;">'..'</div>
<svg class="a" style="left:228px;top:272px" width="15" height="15" viewBox="0 0 15 15"><rect x="0.500" y="0.500" width="14" height="14" fill="url(#gi)" stroke="#7fa3c8"/><text x="7.600" y="10.600" text-anchor="middle" font-family="Liberation Sans" font-weight="bold" font-size="7.500" fill="#3a6690" letter-spacing="-.35">abc</text></svg>
<div class="t" style="left:247.50px;top:270.50px;font-size:13px;line-height:19px;color:#000;letter-spacing:0.233px;letter-spacing:0.232714px;">date</div>
<div class="t" style="left:527.50px;top:270.50px;font-size:13px;line-height:19px;color:#000;letter-spacing:0.980px;letter-spacing:0.980254px;">'13-Dez-2013 2...</div>
<svg class="a" style="left:228px;top:289px" width="15" height="15" viewBox="0 0 15 15"><rect x="0.500" y="0.500" width="14" height="14" fill="url(#gi)" stroke="#7fa3c8"/><path d="M7.500 1v13M1 7.500h13" stroke="#7aa2c9"/></svg>
<div class="t" style="left:247.50px;top:287.50px;font-size:13px;line-height:19px;color:#000;letter-spacing:0.357px;letter-spacing:0.357043px;">bytes</div>
<div class="t" style="left:527.50px;top:287.50px;font-size:13px;line-height:19px;color:#000;">0</div>
<div class="t" style="left:657.50px;top:287.50px;font-size:13px;line-height:19px;color:#000;">0</div>
<div class="t" style="left:707.50px;top:287.50px;font-size:13px;line-height:19px;color:#000;">0</div>
<svg class="a" style="left:228px;top:306px" width="15" height="15" viewBox="0 0 15 15"><rect x="0.500" y="0.500" width="14" height="14" fill="url(#gi)" stroke="#7fa3c8"/><path d="M3 8l3.300 3.300 6-8" fill="none" stroke="#3f6f9f" stroke-width="1.400"/></svg>
<div class="t" style="left:247.50px;top:304.50px;font-size:13px;line-height:19px;color:#000;letter-spacing:0.916px;letter-spacing:0.916074px;">isdir</div>
<div class="t" style="left:528.50px;top:304.50px;font-size:13px;line-height:19px;color:#000;">1</div>
<svg class="a" style="left:228px;top:323px" width="15" height="15" viewBox="0 0 15 15"><rect x="0.500" y="0.500" width="14" height="14" fill="url(#gi)" stroke="#7fa3c8"/><path d="M7.500 1v13M1 7.500h13" stroke="#7aa2c9"/></svg>
<div class="t" style="left:247.50px;top:321.50px;font-size:13px;line-height:19px;color:#000;letter-spacing:0.568px;letter-spacing:0.568146px;">datenum</div>
<div class="t" style="left:527.50px;top:321.50px;font-size:13px;line-height:19px;color:#000;letter-spacing:0.773px;letter-spacing:0.77291px;">7.3558e+05</div>
<div class="t" style="left:657.50px;top:321.50px;font-size:13px;line-height:19px;color:#000;letter-spacing:0.560px;letter-spacing:0.560474px;">7.35...</div>
<div class="t" style="left:707.50px;top:321.50px;font-size:13px;line-height:19px;color:#000;letter-spacing:0.560px;letter-spacing:0.560474px;">7.35...</div>
<div class="a" style="left:1148px;top:171px;width:771px;height:424px;background:#fff;border:1px solid #c9d3de"></div>
<div class="a" style="left:1149px;top:172px;width:769px;height:18px;background:linear-gradient(#fbfbfb,#f4f4f4 50%,#e9e9e9)"></div>
<div class="t" style="left:1154.00px;top:168.50px;font-size:15.5px;line-height:22px;color:#4a4a4a;letter-spacing:-0.468px;letter-spacing:-0.46788px;">Workspace</div>
<svg class="a" style="left:1895px;top:174px" width="14" height="14" viewBox="0 0 14 14"><circle cx="7" cy="7" r="5.700" fill="none" stroke="#666" stroke-width="1"/><path d="M4 5.200h6L7 9.800z" fill="#777"/></svg>
<div class="a" style="left:1149px;top:190px;width:769px;height:1px;background:#7e7e7e"></div>
<div class="a" style="left:1149px;top:191px;width:1px;height:403px;background:#8e8e8e"></div>
<div class="a" style="left:1917px;top:191px;width:1px;height:403px;background:#8e8e8e"></div>
<div class="a" style="left:1149px;top:593px;width:769px;height:1px;background:#8e8e8e"></div>
<div class="a" style="left:1150px;top:191px;width:499.5px;height:15.5px;background:linear-gradient(#ffffff,#f7f7f7 45%,#e6e6e6)"></div>
<div class="a" style="left:1150px;top:206.5px;width:767px;height:1px;background:#b9b9b9"></div>
<div class="a" style="left:1419px;top:193px;width:1px;height:12px;background:#c6c6c6"></div>
<div class="a" style="left:1549px;top:193px;width:1px;height:12px;background:#c6c6c6"></div>
<div class="a" style="left:1599px;top:193px;width:1px;height:12px;background:#c6c6c6"></div>
<div class="a" style="left:1649px;top:193px;width:1px;height:12px;background:#c6c6c6"></div>
<div class="t" style="left:1154.50px;top:190.70px;font-size:11px;line-height:16px;color:#000;letter-spacing:-0.281px;letter-spacing:-0.280833px;">Name</div>
<svg class="a" style="left:1187.5px;top:195.5px" width="7.4" height="5.6" viewBox="0 0 7.4 5.6"><path d="M3.700 0L7.400 5.600H0z" fill="#989898"/></svg>
<div class="t" style="left:1422.70px;top:190.70px;font-size:11px;line-height:16px;color:#000;letter-spacing:0.296px;letter-spacing:0.29559px;">Value</div>
<div class="t" style="left:1553.00px;top:190.70px;font-size:11px;line-height:16px;color:#000;letter-spacing:0.388px;letter-spacing:0.387609px;">Min</div>
<div class="t" style="left:1603.00px;top:190.70px;font-size:11px;line-height:16px;color:#000;letter-spacing:0.360px;letter-spacing:0.359555px;">Max</div>
<div class="a" style="left:1150px;top:207px;width:499.5px;height:17.5px;background:#dcdcdc"></div>
<svg class="a" style="left:1151px;top:208.3px" width="15" height="15" viewBox="0 0 15 15"><rect x="0.500" y="0.500" width="14" height="14" fill="url(#gi)" stroke="#7fa3c8"/><path d="M2 7.500h5M7.500 3.500v8M7.500 3.500h5M7.500 7.500h5M7.500 11.500h5" fill="none" stroke="#5d86b0" stroke-width="1.100"/></svg>
<div class="t" style="left:1170.00px;top:207.00px;font-size:13px;line-height:19px;color:#000;letter-spacing:0.970px;letter-spacing:0.970434px;">liste</div>
<div class="t" style="left:1424.20px;top:207.00px;font-size:13px;line-height:19px;color:#000;letter-spacing:1.024px;letter-spacing:1.0238px;">&lt;5x1 struct&gt;</div>
<svg class="a" style="left:1151px;top:225.3px" width="15" height="15" viewBox="0 0 15 15"><rect x="0.500" y="0.500" width="14" height="14" fill="url(#gi)" stroke="#7fa3c8"/><text x="7.600" y="10.600" text-anchor="middle" font-family="Liberation Sans" font-weight="bold" font-size="7.500" fill="#3a6690" letter-spacing="-.35">abc</text></svg>
<div class="t" style="left:1170.00px;top:224.00px;font-size:13px;line-height:19px;color:#000;letter-spacing:0.733px;letter-spacing:0.732714px;">path</div>
<div class="t" style="left:1422.70px;top:224.00px;font-size:13px;line-height:19px;color:#000;letter-spacing:0.827px;letter-spacing:0.827199px;">'/Users/Metalph...</div>
<div class="a" style="left:225px;top:701px;width:912px;height:250px;background:#fff;border:1px solid #c9d3de"></div>
<div class="a" style="left:226px;top:702px;width:910px;height:18px;background:linear-gradient(#fbfbfb,#f4f4f4 50%,#e9e9e9)"></div>
<div class="t" style="left:231.00px;top:698.70px;font-size:15.5px;line-height:22px;color:#4a4a4a;letter-spacing:-0.187px;letter-spacing:-0.18718px;">Command Window</div>
<svg class="a" style="left:1113px;top:704px" width="14" height="14" viewBox="0 0 14 14"><circle cx="7" cy="7" r="5.700" fill="none" stroke="#666" stroke-width="1"/><path d="M4 5.200h6L7 9.800z" fill="#777"/></svg>
<div class="a" style="left:226px;top:720px;width:16px;height:230px;background:#f0f0f0"></div>
<div class="a" style="left:1121px;top:720px;width:15px;height:230px;background:linear-gradient(90deg,#f0f0f0,#fafafa 50%,#f3f3f3);border-left:1px solid #e8e8e8"></div>
<div class="a" style="left:1125px;top:843.5px;width:8px;height:105px;background:#c8c8c8;border-radius:4px"></div>
<div class="a" style="left:242px;top:720px;width:879px;height:230px;overflow:hidden">
<div class="t" style="left:4.00px;top:-9.20px;font-size:12px;line-height:17px;color:#000;font-family:'Liberation Mono',monospace;letter-spacing:0.8px;">/Users/Metalphony/Desktop/Arbeit</div>
<div class="t" style="left:4.00px;top:18.80px;font-size:12px;line-height:17px;color:#000;font-family:'Liberation Mono',monospace;letter-spacing:0.8px;">&gt;&gt; path = uigetdir</div>
<div class="t" style="left:4.00px;top:46.80px;font-size:12px;line-height:17px;color:#000;font-family:'Liberation Mono',monospace;letter-spacing:0.8px;">path =</div>
<div class="t" style="left:4.00px;top:74.80px;font-size:12px;line-height:17px;color:#000;font-family:'Liberation Mono',monospace;letter-spacing:0.8px;">/Users/Metalphony/Desktop/Arbeit/Fahrten</div>
<div class="t" style="left:4.00px;top:102.80px;font-size:12px;line-height:17px;color:#000;font-family:'Liberation Mono',monospace;letter-spacing:0.8px;">&gt;&gt; liste = dir(path);</div>
<div class="t" style="left:4.00px;top:116.80px;font-size:12px;line-height:17px;color:#000;font-family:'Liberation Mono',monospace;letter-spacing:0.8px;">&gt;&gt; path = uigetdir</div>
<div class="t" style="left:4.00px;top:144.80px;font-size:12px;line-height:17px;color:#000;font-family:'Liberation Mono',monospace;letter-spacing:0.8px;">path =</div>
<div class="t" style="left:4.00px;top:172.80px;font-size:12px;line-height:17px;color:#000;font-family:'Liberation Mono',monospace;letter-spacing:0.8px;">/Users/Metalphony/Desktop/test</div>
<div class="t" style="left:4.00px;top:200.80px;font-size:12px;line-height:17px;color:#000;font-family:'Liberation Mono',monospace;letter-spacing:0.8px;">&gt;&gt; liste = dir(path);</div>
<div class="t" style="left:4.00px;top:214.80px;font-size:12px;line-height:17px;color:#000;font-family:'Liberation Mono',monospace;letter-spacing:0.8px;">&gt;&gt;</div>
</div>
<div class="t" style="left:229.00px;top:930.50px;font-size:14px;line-height:20px;color:#222;font-family:'Liberation Serif',serif;font-style:italic;letter-spacing:0.397px;letter-spacing:0.396594px;">fx</div>
<svg class="a" style="left:236px;top:947px" width="5.4" height="3.2" viewBox="0 0 5.4 3.2"><path d="M0 0h5.400L2.700 3.200z" fill="#000"/></svg>
<div class="a" style="left:1148px;top:607px;width:771px;height:343px;background:#fff;border:1px solid #c9d3de"></div>
<div class="a" style="left:1149px;top:608px;width:769px;height:18px;background:linear-gradient(#fbfbfb,#f4f4f4 50%,#e9e9e9)"></div>
<div class="t" style="left:1154.20px;top:604.80px;font-size:15.5px;line-height:22px;color:#4a4a4a;letter-spacing:-0.067px;letter-spacing:-0.0665px;">Command History</div>
<svg class="a" style="left:1895px;top:610px" width="14" height="14" viewBox="0 0 14 14"><circle cx="7" cy="7" r="5.700" fill="none" stroke="#666" stroke-width="1"/><path d="M4 5.200h6L7 9.800z" fill="#777"/></svg>
<div class="a" style="left:1149px;top:626px;width:769px;height:1px;background:#7e7e7e"></div>
<div class="a" style="left:1149px;top:627px;width:1px;height:322px;background:#8e8e8e"></div>
<div class="a" style="left:1917px;top:627px;width:1px;height:322px;background:#8e8e8e"></div>
<div class="a" style="left:1149px;top:948px;width:769px;height:1px;background:#8e8e8e"></div>
<div class="a" style="left:1901px;top:627px;width:16px;height:321px;background:linear-gradient(90deg,#f0f0f0,#fafafa 50%,#f3f3f3);border-left:1px solid #e8e8e8"></div>
<div class="a" style="left:1905px;top:917px;width:8px;height:30px;background:#c8c8c8;border-radius:4px"></div>
<div class="t" style="left:1192.00px;top:627.80px;font-size:12px;line-height:17px;color:#000;font-family:'Liberation Mono',monospace;letter-spacing:0.8px;">Excel</div>
<div class="t" style="left:1192.00px;top:643.80px;font-size:12px;line-height:17px;color:#000;font-family:'Liberation Mono',monospace;letter-spacing:0.8px;">liste = dir(path_data))</div>
<div class="t" style="left:1192.00px;top:659.80px;font-size:12px;line-height:17px;color:#000;font-family:'Liberation Mono',monospace;letter-spacing:0.8px;">sum([liste.isdir])</div>
<div class="t" style="left:1192.00px;top:675.80px;font-size:12px;line-height:17px;color:#000;font-family:'Liberation Mono',monospace;letter-spacing:0.8px;">liste = dir(path);</div>
<div class="t" style="left:1192.00px;top:691.80px;font-size:12px;line-height:17px;color:#000;font-family:'Liberation Mono',monospace;letter-spacing:0.8px;">liste = dir(path_data);</div>
<div class="t" style="left:1192.00px;top:707.80px;font-size:12px;line-height:17px;color:#000;font-family:'Liberation Mono',monospace;letter-spacing:0.8px;">sum([liste.isdir]);</div>
<div class="t" style="left:1192.00px;top:723.80px;font-size:12px;line-height:17px;color:#000;font-family:'Liberation Mono',monospace;letter-spacing:0.8px;">clera <span style="color:#a64dff">all</span></div>
<div class="t" style="left:1192.00px;top:739.80px;font-size:12px;line-height:17px;color:#000;font-family:'Liberation Mono',monospace;letter-spacing:0.8px;">clear <span style="color:#a64dff">all</span></div>
<div class="t" style="left:1192.00px;top:755.80px;font-size:12px;line-height:17px;color:#000;font-family:'Liberation Mono',monospace;letter-spacing:0.8px;">path = uigetdir</div>
<div class="t" style="left:1192.00px;top:771.80px;font-size:12px;line-height:17px;color:#000;font-family:'Liberation Mono',monospace;letter-spacing:0.8px;">liste = dir(path);</div>
<div class="t" style="left:1192.00px;top:787.80px;font-size:12px;line-height:17px;color:#000;font-family:'Liberation Mono',monospace;letter-spacing:0.8px;">sum([liste.isdir]);</div>
<div class="t" style="left:1173.30px;top:803.80px;font-size:12px;line-height:17px;color:#2a9a3c;font-family:'Liberation Mono',monospace;letter-spacing:0.8px;">%-- 13.12.13 21:27 --%</div>
<svg class="a" style="left:1153.5px;top:807.3px" width="11" height="9" viewBox="0 0 11 9"><path d="M0.500 0.500h10L5.500 8.500z" fill="#7e7e7e"/></svg>
<div class="t" style="left:1192.00px;top:819.80px;font-size:12px;line-height:17px;color:#000;font-family:'Liberation Mono',monospace;letter-spacing:0.8px;">path = uigetdir</div>
<div class="t" style="left:1192.00px;top:835.80px;font-size:12px;line-height:17px;color:#000;font-family:'Liberation Mono',monospace;letter-spacing:0.8px;">liste = dir(path);</div>
<div class="t" style="left:1192.00px;top:851.80px;font-size:12px;line-height:17px;color:#000;font-family:'Liberation Mono',monospace;letter-spacing:0.8px;">path = uigetdir</div>
<div class="t" style="left:1192.00px;top:867.80px;font-size:12px;line-height:17px;color:#000;font-family:'Liberation Mono',monospace;letter-spacing:0.8px;">liste = dir(path);</div>
<div class="t" style="left:1192.00px;top:883.80px;font-size:12px;line-height:17px;color:#000;font-family:'Liberation Mono',monospace;letter-spacing:0.8px;">path = uigetdir</div>
<div class="t" style="left:1192.00px;top:899.80px;font-size:12px;line-height:17px;color:#000;font-family:'Liberation Mono',monospace;letter-spacing:0.8px;">liste = dir(path);</div>
<div class="t" style="left:1192.00px;top:915.80px;font-size:12px;line-height:17px;color:#000;font-family:'Liberation Mono',monospace;letter-spacing:0.8px;">path = uigetdir</div>
<div class="t" style="left:1192.00px;top:931.80px;font-size:12px;line-height:17px;color:#000;font-family:'Liberation Mono',monospace;letter-spacing:0.8px;">liste = dir(path);</div>
<svg class="a" style="left:216px;top:557px" width="5" height="7" viewBox="0 0 5 7"><path d="M3.500 1L1.500 3.500 3.500 6" fill="none" stroke="#888" stroke-width="1"/></svg>
<svg class="a" style="left:1140px;top:557px" width="5" height="7" viewBox="0 0 5 7"><path d="M3.500 1L1.500 3.500 3.500 6" fill="none" stroke="#888" stroke-width="1"/></svg>
<svg class="a" style="left:677px;top:692px" width="7" height="5" viewBox="0 0 7 5"><path d="M1 3.500L3.500 1.500 6 3.500" fill="none" stroke="#888" stroke-width="1"/></svg>
<svg class="a" style="left:1529px;top:598px" width="7" height="5" viewBox="0 0 7 5"><path d="M1 3.500L3.500 1.500 6 3.500" fill="none" stroke="#888" stroke-width="1"/></svg>
</body>
</html>
